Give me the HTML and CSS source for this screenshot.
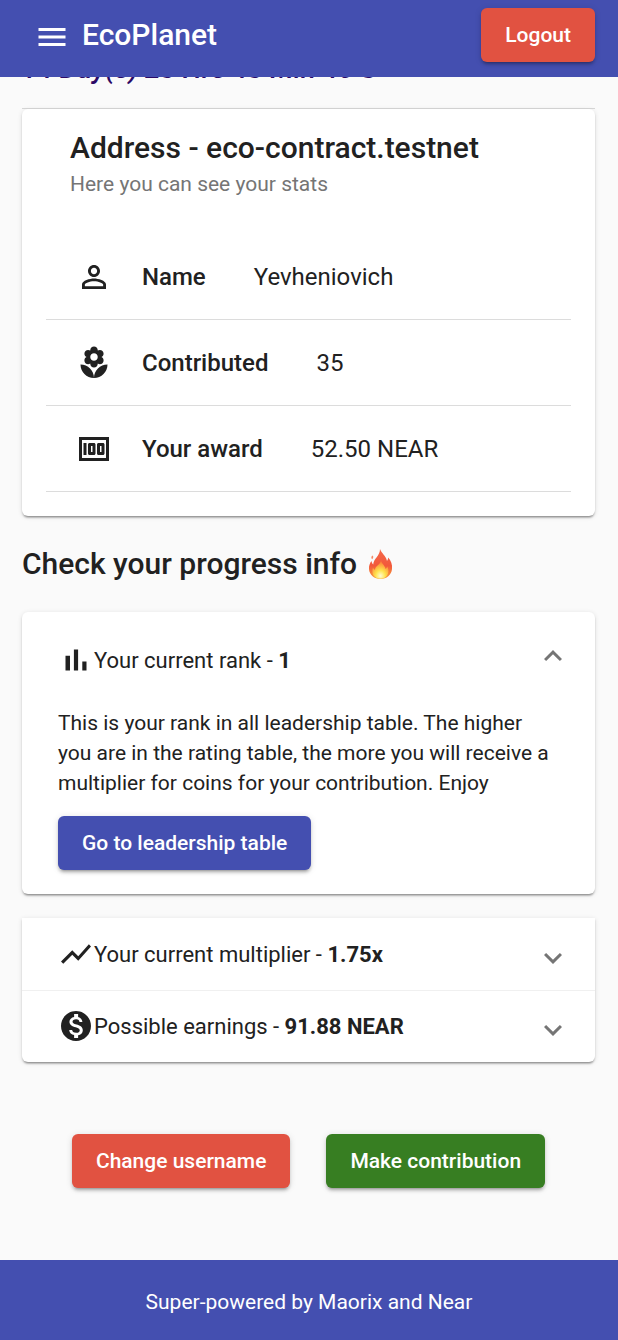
FILE: index.html
```html
<!DOCTYPE html>
<html lang="en">
<head>
<meta charset="utf-8">
<meta name="viewport" content="width=device-width, initial-scale=1">
<title>EcoPlanet</title>
<link rel="stylesheet" href="styles.css">
</head>
<body>
<header class="topbar">
  <button class="menu-button" type="button" aria-label="Open menu">
    <svg class="icon" viewBox="0 0 24 24"><path d="M3 18h18v-2H3v2zm0-5h18v-2H3v2zm0-7v2h18V6H3z"/></svg>
  </button>
  <h1 class="brand">EcoPlanet</h1>
  <button class="button button-danger" type="button">Logout</button>
</header>

<main class="content">
  <p class="countdown">14 Day(s) 23 Hrs 43 Min 40 S</p>

  <section class="stats card">
    <div class="stats-head">
      <h2 class="title">Address - eco-contract.testnet</h2>
      <p class="subtitle">Here you can see your stats</p>
    </div>
    <dl class="stats-list">
      <div class="stats-row">
        <dt class="stats-label">
          <svg class="icon" viewBox="0 0 24 24" aria-hidden="true"><path d="M12 5.9c1.16 0 2.1.94 2.1 2.1s-.94 2.1-2.1 2.1S9.9 9.16 9.9 8s.94-2.1 2.1-2.1m0 9c2.97 0 6.1 1.46 6.1 2.1v1.1H5.9V17c0-.64 3.13-2.1 6.1-2.1M12 4C9.79 4 8 5.79 8 8s1.79 4 4 4 4-1.79 4-4-1.79-4-4-4zm0 9c-2.67 0-8 1.34-8 4v3h16v-3c0-2.66-5.33-4-8-4z"/></svg>
          Name
        </dt>
        <dd class="stats-value">Yevheniovich</dd>
      </div>
      <div class="stats-row">
        <dt class="stats-label">
          <svg class="icon" viewBox="0 0 24 24" aria-hidden="true"><path d="M12 22c4.97 0 9-4.03 9-9-4.97 0-9 4.03-9 9zM5.6 10.25c0 1.38 1.12 2.5 2.5 2.5.53 0 1.01-.16 1.42-.44l-.02.19c0 1.38 1.12 2.5 2.5 2.5s2.5-1.12 2.5-2.5l-.02-.19c.4.28.89.44 1.42.44 1.38 0 2.5-1.12 2.5-2.5 0-1-.59-1.85-1.43-2.25.84-.4 1.43-1.25 1.43-2.25 0-1.38-1.12-2.5-2.5-2.5-.53 0-1.01.16-1.42.44l.02-.19C14.5 2.12 13.38 1 12 1S9.5 2.12 9.5 3.5l.02.19c-.4-.28-.89-.44-1.42-.44-1.38 0-2.5 1.12-2.5 2.5 0 1 .59 1.85 1.43 2.25-.84.4-1.43 1.25-1.43 2.25zM12 5.5c1.38 0 2.5 1.12 2.5 2.5s-1.12 2.5-2.5 2.5S9.5 9.38 9.5 8s1.12-2.5 2.5-2.5zM3 13c0 4.97 4.03 9 9 9 0-4.97-4.03-9-9-9z"/></svg>
          Contributed
        </dt>
        <dd class="stats-value">35</dd>
      </div>
      <div class="stats-row">
        <dt class="stats-label">
          <svg class="icon" viewBox="0 0 24 24" aria-hidden="true"><path d="M5 8h2v8H5zm7 0H9c-.55 0-1 .45-1 1v6c0 .55.45 1 1 1h3c.55 0 1-.45 1-1V9c0-.55-.45-1-1-1zm-1 6h-1v-4h1v4zm7-6h-3c-.55 0-1 .45-1 1v6c0 .55.45 1 1 1h3c.55 0 1-.45 1-1V9c0-.55-.45-1-1-1zm-1 6h-1v-4h1v4zM2 4v16h20V4H2zm2 14V6h16v12H4z"/></svg>
          Your award
        </dt>
        <dd class="stats-value">52.50 NEAR</dd>
      </div>
    </dl>
  </section>

  <h2 class="title progress-title">
    Check your progress info
    <svg class="flame" viewBox="0 0 24 30" role="img" aria-label="fire">
      <defs>
        <linearGradient id="flame-outer" x1="0" y1="0" x2="0" y2="1">
          <stop offset="0" stop-color="#f4694a"/>
          <stop offset=".55" stop-color="#f2583b"/>
          <stop offset="1" stop-color="#f9a13a"/>
        </linearGradient>
        <radialGradient id="flame-inner" cx=".5" cy=".85" r=".75">
          <stop offset="0" stop-color="#fffbd0"/>
          <stop offset=".4" stop-color="#ffe34d"/>
          <stop offset="1" stop-color="#fb7f38"/>
        </radialGradient>
      </defs>
      <path fill="url(#flame-outer)" d="M11.500 0c1.500 4.500 6 6.500 7 12 .8-1 1.200-2.200 1.200-3.500C22.500 11.500 24 15.500 23.500 20 23 26 18 30 12 30S.8 26 .5 20C.3 16.500 1.500 14 3 12c.2 1.500.7 2.600 1.700 3.500C5 9.500 11.500 7 11.500 0z"/>
      <path fill="#f58a68" d="M4 6.500c1.200 1 1 2.600-.4 3.800C2.400 9 2.600 7.500 4 6.500z"/>
      <path fill="url(#flame-inner)" d="M12.500 11c0 3.500 4 5 4.500 9 .8-.5 1.500-1.400 1.700-2.500 1.800 3 1.800 6.500-.2 9.300C16.800 28.800 15 29.700 12 29.700s-5.200-1-6.800-2.900C3.500 24.500 3.600 21 4.500 18.500c.4 1.200 1 1.800 2 2.300.3-4.300 6-5.300 6-9.800z"/>
    </svg>
  </h2>

  <div class="accordion">
    <details class="panel card" open>
      <summary class="panel-summary">
        <svg class="icon" viewBox="0 0 24 24" aria-hidden="true"><path d="M5 9.200h3V19H5zM10.600 5h2.800v14h-2.800zm5.600 8H19v6h-2.800z"/></svg>
        <span class="panel-text">Your current rank - <b>1</b></span>
        <span class="chevron"><svg class="icon" viewBox="0 0 24 24" aria-hidden="true"><path d="M16.590 8.590L12 13.170 7.410 8.590 6 10l6 6 6-6z"/></svg></span>
      </summary>
      <div class="panel-body">
        <p class="panel-copy">This is your rank in all leadership table. The higher you are in the rating table, the more you will receive a multiplier for coins for your contribution. Enjoy</p>
        <button class="button button-primary" type="button">Go to leadership table</button>
      </div>
    </details>
    <div class="panel-group card">
      <details class="panel">
        <summary class="panel-summary">
          <svg class="icon" viewBox="0 0 24 24" aria-hidden="true"><path d="M3.500 18.490l6-6.010 4 4L22 6.920l-1.410-1.410-7.090 7.970-4-4L2 16.990z"/></svg>
          <span class="panel-text">Your current multiplier - <b>1.75x</b></span>
          <span class="chevron"><svg class="icon" viewBox="0 0 24 24" aria-hidden="true"><path d="M16.590 8.590L12 13.170 7.410 8.590 6 10l6 6 6-6z"/></svg></span>
        </summary>
      </details>
      <details class="panel">
        <summary class="panel-summary">
          <svg class="icon" viewBox="0 0 24 24" aria-hidden="true"><path d="M12 2C6.480 2 2 6.480 2 12s4.480 10 10 10 10-4.480 10-10S17.520 2 12 2zm1.410 16.090V20h-2.670v-1.930c-1.710-.36-3.160-1.460-3.270-3.400h1.960c.1 1.050.82 1.870 2.650 1.870 1.960 0 2.400-.98 2.400-1.590 0-.83-.44-1.610-2.670-2.140-2.480-.6-4.180-1.620-4.180-3.670 0-1.720 1.390-2.840 3.110-3.210V4h2.670v1.950c1.860.45 2.790 1.860 2.850 3.390H14.300c-.05-1.110-.64-1.870-2.220-1.870-1.500 0-2.400.68-2.400 1.640 0 .84.65 1.390 2.670 1.910s4.180 1.390 4.180 3.910c-.01 1.830-1.380 2.830-3.120 3.160z"/></svg>
          <span class="panel-text">Possible earnings - <b>91.88 NEAR</b></span>
          <span class="chevron"><svg class="icon" viewBox="0 0 24 24" aria-hidden="true"><path d="M16.590 8.590L12 13.170 7.410 8.590 6 10l6 6 6-6z"/></svg></span>
        </summary>
      </details>
    </div>
  </div>

  <div class="actions">
    <button class="button button-danger" type="button">Change username</button>
    <button class="button button-success" type="button">Make contribution</button>
  </div>
</main>

<footer class="footer">Super-powered by Maorix and Near</footer>
</body>
</html>
```
FILE: styles.css
```css
* {
  box-sizing: border-box;
}

body {
  margin: 0;
  min-height: 100vh;
  display: flex;
  flex-direction: column;
  background: #fafafa;
  color: #212121;
  font-family: Roboto, "Liberation Sans", sans-serif;
  font-size: 21px;
  line-height: 30px;
}

h1, h2, p, dl, dd {
  margin: 0;
}

.icon {
  display: block;
  flex: none;
  width: 36px;
  height: 36px;
  fill: currentColor;
}

.card {
  background: #fff;
  border-radius: 6px;
  box-shadow: 0 3px 2px -2px rgba(0, 0, 0, 0.3), 0 2px 2px rgba(0, 0, 0, 0.14), 0 1px 5px rgba(0, 0, 0, 0.12);
}

.title {
  font-size: 30px;
  font-weight: 500;
  line-height: 40px;
}

.button {
  padding: 12px 24px;
  border: 0;
  border-radius: 6px;
  color: #fff;
  font: inherit;
  font-weight: 500;
  white-space: nowrap;
  box-shadow: 0 4px 2px -3px rgba(0, 0, 0, 0.2), 0 3px 3px rgba(0, 0, 0, 0.16), 0 1px 7px rgba(0, 0, 0, 0.12);
  cursor: pointer;
}

.button-primary { background: #444fb0; }
.button-danger { background: #e15241; }
.button-success { background: #377e22; }

/* Top bar */
.topbar {
  position: sticky;
  top: 0;
  z-index: 1;
  display: flex;
  align-items: flex-start;
  padding: 8px 23px 15px 34px;
  background: #444fb0;
  color: #fff;
}

.menu-button {
  padding: 11px 0 0;
  border: 0;
  background: none;
  color: inherit;
  cursor: pointer;
}

.brand {
  flex: 1;
  padding: 7px 12px 0;
  font-size: 30px;
  font-weight: 500;
  line-height: 40px;
}

/* Main content */
.content {
  flex: 1;
  padding: 0 23px 72px 22px;
}

.countdown {
  margin-top: -26px;
  padding-bottom: 21px;
  border-bottom: 1px solid #d8d8d8;
  color: #2c0a66;
  font-size: 28px;
  font-style: italic;
  font-weight: 500;
  line-height: 36px;
}

.stats {
  padding: 19px 24px 24px;
}

.stats-head {
  padding: 0 24px 34px;
}

.subtitle {
  color: #757575;
  line-height: 32px;
}

.stats-row {
  display: flex;
  align-items: center;
  gap: 48px;
  min-height: 86px;
  padding: 0 30px;
  border-bottom: 1px solid #dcdcdc;
  font-size: 24px;
}

.stats-label {
  display: flex;
  align-items: center;
  gap: 30px;
  font-weight: 500;
}

.progress-title {
  display: flex;
  align-items: center;
  gap: 11px;
  padding: 28px 0;
}

.flame {
  width: 25px;
  height: 30px;
}

/* Accordion */
.accordion {
  display: grid;
  gap: 24px;
}

.panel-group {
  border-radius: 0 0 6px 6px;
}

.panel-group .panel + .panel {
  box-shadow: inset 0 1px #f0f0f0;
}

.panel-summary {
  display: flex;
  align-items: center;
  min-height: 72px;
  padding: 0 24px 0 36px;
  font-size: 22px;
  list-style: none;
  cursor: pointer;
}

.panel[open] .panel-summary {
  min-height: 96px;
}

.panel-text {
  flex: 1;
  padding-top: 2px;
}

.panel b {
  font-weight: 700;
}

.chevron {
  padding-top: 8px;
  color: #757575;
}

.panel[open] .chevron {
  transform: rotate(180deg);
}

.panel-body {
  display: flex;
  flex-direction: column;
  align-items: flex-start;
  gap: 18px;
  padding: 0 36px 24px;
}

.actions {
  display: flex;
  flex-wrap: wrap;
  justify-content: center;
  gap: 36px;
  padding-top: 72px;
}

.footer {
  padding: 27px 24px 23px;
  background: #444fb0;
  color: #fff;
  text-align: center;
}
```
